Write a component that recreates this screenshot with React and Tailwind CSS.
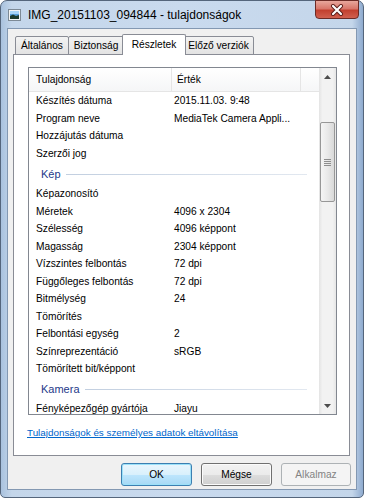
import React from "react";

const rows1 = [
  ["Készítés dátuma", "2015.11.03. 9:48"],
  ["Program neve", "MediaTek Camera Appli..."],
  ["Hozzájutás dátuma", ""],
  ["Szerzői jog", ""],
];
const rows2 = [
  ["Képazonosító", ""],
  ["Méretek", "4096 x 2304"],
  ["Szélesség", "4096 képpont"],
  ["Magasság", "2304 képpont"],
  ["Vízszintes felbontás", "72 dpi"],
  ["Függőleges felbontás", "72 dpi"],
  ["Bitmélység", "24"],
  ["Tömörítés", ""],
  ["Felbontási egység", "2"],
  ["Színreprezentáció", "sRGB"],
  ["Tömörített bit/képpont", ""],
];
const rows3 = [["Fényképezőgép gyártója", "Jiayu"]];

function Row({ name, value }) {
  return (
    <div className="flex h-[17.5px] items-center text-black whitespace-nowrap">
      <div className="w-[143px] pl-[7px]">{name}</div>
      <div className="pl-[2px]">{value}</div>
    </div>
  );
}

function Group({ title, tall }) {
  return (
    <div className={`flex ${tall ? "h-[23px]" : "h-[22px]"} items-center pl-[12px] pr-[12px] pt-[1px]`}>
      <span className="text-[#1e3a8a] text-[11px]">{title}</span>
      <div className="ml-[5px] flex-1 h-px bg-gradient-to-r from-[#c2cfe0] to-[#e2e8f0]" />
    </div>
  );
}

function Tab({ label, selected, w }) {
  if (selected) {
    return (
      <div
        className={`relative z-10 -mx-[2px] h-[21px] ${w} border border-b-0 border-[#898c95] bg-white flex items-start justify-center pt-[2px] rounded-t-[2px]`}
      >
        {label}
      </div>
    );
  }
  return (
    <div
      className={`mt-[2px] h-[19px] ${w} -ml-px first:ml-0 border border-[#898c95] bg-gradient-to-b from-[#f3f3f3] to-[#e3e3e3] flex items-center justify-center rounded-t-[2px]`}
    >
      {label}
    </div>
  );
}

export default function App() {
  return (
    <div
      className="w-[366px] h-[500px] bg-white overflow-hidden text-[10.2px] text-black"
      style={{ fontFamily: '"Liberation Sans", Arial, sans-serif' }}
    >
      <div className="relative w-[364px] h-[498px] rounded-t-[7px] rounded-b-[5px] border border-[#55667c] bg-[linear-gradient(90deg,#a9c2de_0%,#c4d6ea_3%,#c9daee_50%,#c4d6ea_97%,#8fabcf_100%)] flex flex-col">
        {/* title bar */}
        <div className="h-[27px] flex items-center pl-[7px] shrink-0">
          <svg width="13" height="12" viewBox="0 0 13 12" className="mt-[1px]">
            <rect x="0.5" y="0.5" width="12" height="11" fill="#f4f4f4" stroke="#7d8a96" />
            <rect x="2" y="2" width="9" height="8" fill="#5a9fd8" />
            <rect x="2" y="2" width="9" height="3" fill="#a8d4f5" />
            <path d="M2 10 L2 7 L5 5.5 L8 7 L11 6 L11 10 Z" fill="#1e3b2a" />
          </svg>
          <span className="ml-[7px] text-[12px] text-black">IMG_20151103_094844 - tulajdonságok</span>
        </div>
        {/* close button */}
        <div className="absolute left-[314px] top-[-1px] w-[44px] h-[19px] rounded-b-[4px] border border-[#6b2b26] bg-[linear-gradient(180deg,#e8a79c_0%,#d8776b_45%,#c2402f_55%,#d0604f_100%)] flex items-center justify-center">
          <svg width="14" height="12" viewBox="0 0 14 12">
            <path d="M3 2 L11 10 M11 2 L3 10" stroke="#5a1d18" strokeWidth="4" strokeLinecap="round" />
            <path d="M3 2 L11 10 M11 2 L3 10" stroke="#ffffff" strokeWidth="2.2" strokeLinecap="round" />
          </svg>
        </div>

        {/* client */}
        <div className="mx-[6px] h-[462px] border border-[#8398b2] bg-[#f0f0f0] flex flex-col">
          {/* tabs */}
          <div className="flex pl-[7px] pt-[5px] h-[25px] shrink-0 items-start">
            <Tab label="Általános" w="w-[54px]" />
            <Tab label="Biztonság" w="w-[56px]" />
            <Tab label="Részletek" w="w-[64px]" selected />
            <Tab label="Előző verziók" w="w-[71px]" />
          </div>
          {/* panel */}
          <div className="ml-[5px] mr-[6px] h-[402px] border border-[#898c95] bg-white flex flex-col shrink-0">
            <div className="ml-[14px] mr-[12px] mt-[12px] h-[348px] border border-[#828790] bg-white flex">
              <div className="flex-1 overflow-hidden">
                {/* header */}
                <div className="flex h-[24px] items-center border-b border-[#e5e5e5] bg-gradient-to-b from-white to-[#f5f6f7] whitespace-nowrap">
                  <div className="w-[143px] pl-[7px] h-full flex items-center border-r border-[#e5e5e5]">Tulajdonság</div>
                  <div className="w-[129px] pl-[5px] h-full flex items-center border-r border-[#e5e5e5]">Érték</div>
                </div>
                {rows1.map((r) => (
                  <Row key={r[0]} name={r[0]} value={r[1]} />
                ))}
                <Group title="Kép" tall />
                {rows2.map((r) => (
                  <Row key={r[0]} name={r[0]} value={r[1]} />
                ))}
                <Group title="Kamera" />
                {rows3.map((r) => (
                  <Row key={r[0]} name={r[0]} value={r[1]} />
                ))}
              </div>
              {/* scrollbar */}
              <div className="w-[17px] flex flex-col bg-[linear-gradient(90deg,#e3e3e3_0%,#f2f2f2_20%,#f2f2f2_80%,#e6e6e6_100%)]">
                <div className="h-[17px] flex items-center justify-center">
                  <svg width="7" height="4" viewBox="0 0 7 4"><path d="M0 4 L3.5 0 L7 4 Z" fill="#4d4d4d" /></svg>
                </div>
                <div className="h-[37px]" />
                <div className="mx-[1px] h-[80px] rounded-[2px] border border-[#979797] bg-[linear-gradient(90deg,#f5f5f5_0%,#e9e9e9_50%,#d9d9d9_100%)] flex items-center justify-center">
                  <div className="flex flex-col gap-[1px]">
                    <div className="w-[7px] h-px bg-[#8e8e8e]" />
                    <div className="w-[7px] h-px bg-[#8e8e8e]" />
                    <div className="w-[7px] h-px bg-[#8e8e8e]" />
                    <div className="w-[7px] h-px bg-[#8e8e8e]" />
                  </div>
                </div>
                <div className="flex-1" />
                <div className="h-[17px] flex items-center justify-center">
                  <svg width="7" height="4" viewBox="0 0 7 4"><path d="M0 0 L3.5 4 L7 0 Z" fill="#4d4d4d" /></svg>
                </div>
              </div>
            </div>
            <div className="ml-[13px] mt-[11px] text-[9.85px] text-[#0066cc] underline whitespace-nowrap">
              Tulajdonságok és személyes adatok eltávolítása
            </div>
          </div>
          {/* buttons */}
          <div className="flex justify-end gap-[9px] pr-[5px] pt-[7px]">
            <div className="w-[71px] h-[23px] rounded-[3px] border border-[#3c7fb1] bg-[linear-gradient(180deg,#eaf6fd_0%,#d9f0fc_50%,#bee6fd_51%,#a7d9f5_100%)] shadow-[inset_0_0_0_1px_#9ce1f9] flex items-center justify-center">
              OK
            </div>
            <div className="w-[71px] h-[23px] rounded-[3px] border border-[#707070] bg-[linear-gradient(180deg,#f2f2f2_0%,#ebebeb_50%,#dddddd_51%,#cfcfcf_100%)] shadow-[inset_0_0_0_1px_#fbfbfb] flex items-center justify-center">
              Mégse
            </div>
            <div className="w-[70px] h-[23px] rounded-[3px] border border-[#adb2b5] bg-[#f4f4f4] text-[#838383] flex items-center justify-center">
              Alkalmaz
            </div>
          </div>
        </div>
      </div>
    </div>
  );
}
